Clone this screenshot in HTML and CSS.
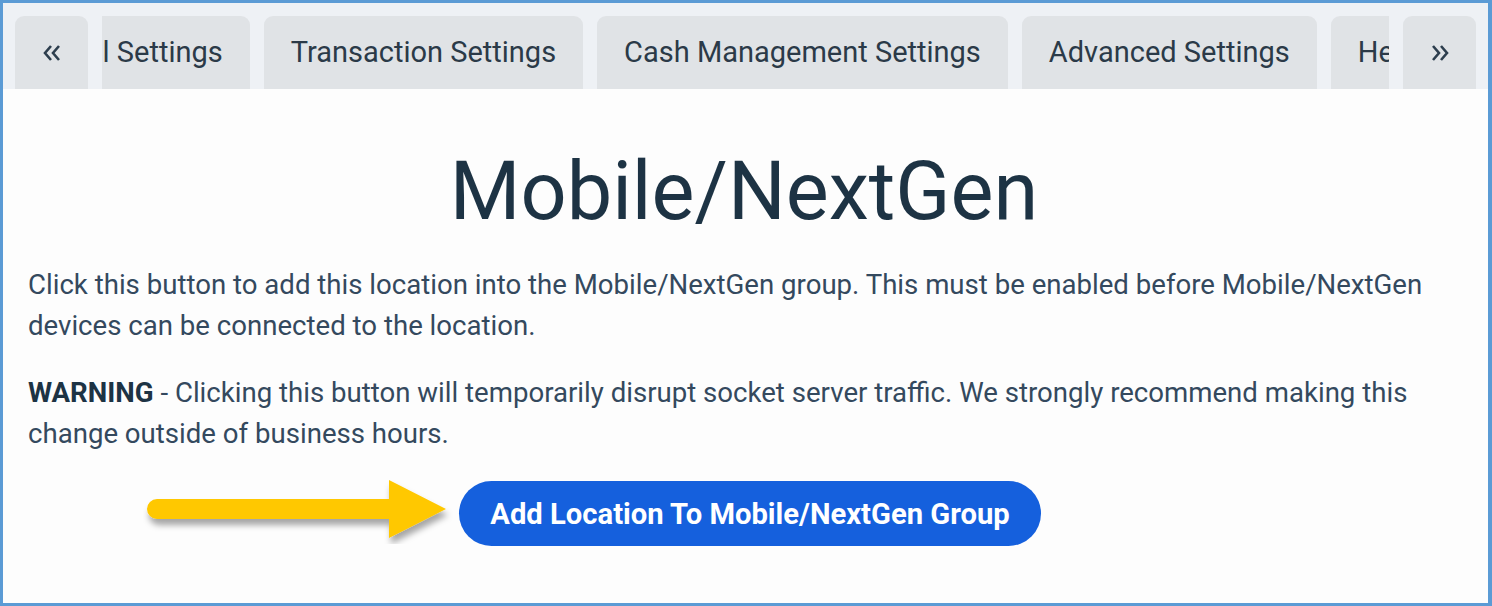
FILE: index.html
```html
<!DOCTYPE html>
<html lang="en">
<head>
  <meta charset="UTF-8" />
  <meta name="viewport" content="width=device-width, initial-scale=1.0" />
  <title>Mobile/NextGen</title>
  <link rel="stylesheet" href="styles.css">
</head>
<body>
  <div class="frame">
    <div class="tab-strip">
      <button class="tab-scroll" aria-label="Scroll left">
        <svg width="20" height="18" viewBox="0 0 20 18"><polyline points="9,2 3,9 9,16" /><polyline points="17,2 11,9 17,16" /></svg>
      </button>
      <div class="tab-viewport">
        <div class="tab-track">
          <div class="tab">General Settings</div>
          <div class="tab">Transaction Settings</div>
          <div class="tab">Cash Management Settings</div>
          <div class="tab">Advanced Settings</div>
          <div class="tab">Help Settings</div>
        </div>
      </div>
      <button class="tab-scroll" aria-label="Scroll right">
        <svg width="20" height="18" viewBox="0 0 20 18"><polyline points="3,2 9,9 3,16" /><polyline points="11,2 17,9 11,16" /></svg>
      </button>
    </div>

    <div class="content">
      <h1 class="title">Mobile/NextGen</h1>
      <p>Click this button to add this location into the Mobile/NextGen group. This must be enabled before Mobile/NextGen devices can be connected to the location.</p>
      <p><strong>WARNING</strong> - Clicking this button will temporarily disrupt socket server traffic. We strongly recommend making this change outside of business hours.</p>
      <div class="action">
        <button class="add-btn">
          Add Location To Mobile/NextGen Group
          <svg class="pointer" width="310" height="70" viewBox="0 0 310 70">
            <defs>
              <filter id="shadow" x="-10%" y="-30%" width="120%" height="170%">
                <feDropShadow dx="2" dy="6" stdDeviation="3" flood-color="#000" flood-opacity="0.35" />
              </filter>
            </defs>
            <path filter="url(#shadow)" fill="#ffc800" d="M14 25 H246 V6 L303 35 L246 64 V45 H14 A10 10 0 0 1 14 25 Z" />
          </svg>
        </button>
      </div>
    </div>
  </div>
</body>
</html>
```

FILE: styles.css
```css
body {
  margin: 0;
  font-family: Roboto, 'Liberation Sans', sans-serif;
  background: #fdfdfd;
}
.frame {
  width: 1492px;
  height: 606px;
  box-sizing: border-box;
  border: 3px solid #5b9bd5;
  border-right-width: 4px;
  background: #fdfdfd;
  overflow: hidden;
}
.tab-strip {
  display: flex;
  gap: 14px;
  padding: 13px 12px 0 12px;
  background: #eef1f5;
}
.tab-scroll {
  flex: none;
  width: 73px;
  height: 73px;
  border: none;
  border-radius: 9px 9px 0 0;
  background: #e0e3e6;
  display: flex;
  align-items: center;
  justify-content: center;
  padding: 0;
}
.tab-scroll svg polyline {
  fill: none;
  stroke: #2d3e4e;
  stroke-width: 2.6;
}
.tab-viewport {
  flex: 1;
  overflow: hidden;
}
.tab-track {
  display: flex;
  gap: 14px;
  margin-left: -118px;
}
.tab {
  flex: none;
  height: 73px;
  line-height: 73px;
  padding: 0 27px;
  border-radius: 9px 9px 0 0;
  background: #e0e3e6;
  color: #2b3a48;
  font-size: 29px;
  white-space: nowrap;
}
.content {
  padding: 54px 28px 0 25px;
  color: #34495e;
}
.title {
  margin: 0 0 24px;
  text-align: center;
  font-size: 81px;
  font-weight: 400;
  line-height: 1.2;
  color: #1d3344;
}
.content p {
  margin: 0 0 26px;
  font-size: 27.6px;
  line-height: 41px;
}
.content strong {
  color: #1d3344;
}
.action {
  display: flex;
  justify-content: center;
  padding: 1px 0 0 12px;
}
.add-btn {
  position: relative;
  height: 65px;
  padding: 0 31px;
  border: none;
  border-radius: 33px;
  background: #1560dd;
  color: #fff;
  font-family: Roboto, 'Liberation Sans', sans-serif;
  font-size: 29.2px;
  font-weight: 700;
}
.pointer {
  position: absolute;
  right: 100%;
  top: -7px;
  margin-right: 6px;
}
```
